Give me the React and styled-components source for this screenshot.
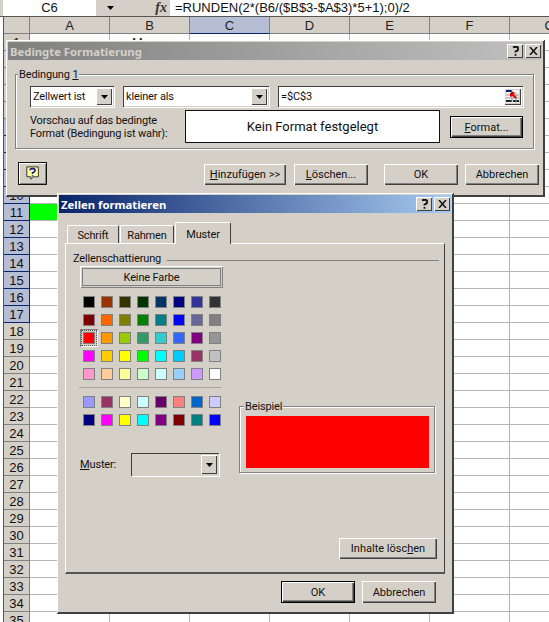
import React from 'react';
import styled, { createGlobalStyle } from 'styled-components';

const Global = createGlobalStyle`
  html, body { margin: 0; padding: 0; background: #fff; }
  * { box-sizing: border-box; }
`;

const FACE = '#d4d0c8';
const UI = 'Roboto, "Liberation Sans", sans-serif';

const Screen = styled.div`
  position: relative;
  width: 549px;
  height: 622px;
  overflow: hidden;
  background: #fff;
  font-family: ${UI};
  font-size: 11px;
  letter-spacing: -0.15px;
  color: #111;
`;

const FormulaBar = styled.div`
  display: flex;
  height: 17px;
  background: ${FACE};
  border-bottom: 1px solid #555;
  padding-left: 3px;
  font-family: "Liberation Sans", sans-serif;
  font-size: 13px;
  letter-spacing: 0;
  line-height: 16px;
`;
const NameBox = styled.div`
  width: 93px;
  background: #fff;
  text-align: center;
`;
const NameArrow = styled.div`
  width: 29px;
  display: flex;
  align-items: center;
  justify-content: center;
`;
const Fx = styled.div`
  width: 45px;
  text-align: right;
  padding-right: 3px;
  font-family: "Liberation Serif", serif;
  font-style: italic;
  font-weight: bold;
  font-size: 14px;
  color: #333;
`;
const FormulaInput = styled.div`
  flex: 1;
  background: #fff;
  padding-left: 5px;
  white-space: nowrap;
`;

const Sheet = styled.div`
  display: grid;
  grid-template-columns: 26px repeat(7, 80px);
  grid-auto-rows: 17px;
  margin-left: 3px;
  border-left: 1px solid #555;
  font-family: "Liberation Sans", sans-serif;
  font-size: 13px;
  letter-spacing: 0;
`;
const Corner = styled.div`
  background: ${FACE};
  border-right: 1px solid #808080;
  border-bottom: 1px solid #808080;
`;
const ColHead = styled.div`
  background: ${p => (p.$sel ? '#b6bed6' : FACE)};
  border-right: 1px solid #808080;
  border-bottom: 1px solid ${p => (p.$sel ? '#0a246a' : '#808080')};
  text-align: center;
  line-height: 17px;
  color: #222;
`;
const RowHead = styled.div`
  background: ${p => (p.$sel ? '#b6bed6' : FACE)};
  border-right: 1px solid ${p => (p.$sel ? '#0a246a' : '#808080')};
  border-bottom: 1px solid ${p => (p.$sel ? '#0a246a' : '#808080')};
  text-align: center;
  line-height: 17px;
  color: #111;
`;
const Cell = styled.div`
  background: ${p => (p.$fill ? '#00ff00' : '#fff')};
  border-right: 1px solid #b4b4b4;
  border-bottom: 1px solid #b4b4b4;
  line-height: 17px;
  padding-left: ${p => (p.$indent ? '22px' : '0')};
  overflow: hidden;
`;

const Dialog = styled.div`
  position: absolute;
  left: ${p => p.$x}px;
  top: ${p => p.$y}px;
  width: ${p => p.$w}px;
  height: ${p => p.$h}px;
  background: ${FACE};
  padding: 2px;
  box-shadow: inset 1px 1px 0 #fff, inset -1px -1px 0 #404040;
  border-right: 1px solid #404040;
  border-bottom: 1px solid #404040;
  display: flex;
  flex-direction: column;
`;
const TitleBar = styled.div`
  height: 18px;
  flex: none;
  display: flex;
  align-items: center;
  padding: 0 1px 0 2px;
  background: ${p => (p.$active
    ? 'linear-gradient(90deg, #0a246a, #a6caf0)'
    : 'linear-gradient(90deg, #808080, #c0c0c0)')};
  color: ${p => (p.$active ? '#fff' : FACE)};
  font-family: "Noto Sans", sans-serif;
  font-weight: bold;
  font-size: 11.3px;
  letter-spacing: 0;
  white-space: nowrap;
`;
const TitleText = styled.span`
  flex: 1;
`;
const CapButton = styled.button`
  width: 16px;
  height: 14px;
  margin-left: ${p => (p.$gap ? '2px' : '0')};
  padding: 0;
  border: 0;
  background: ${FACE};
  box-shadow: inset 1px 1px 0 #fff, inset -1px -1px 0 #404040;
  display: flex;
  align-items: center;
  justify-content: center;
`;

const CondBody = styled.div`
  flex: 1;
  padding: 14px 0 0 7px;
  display: flex;
  flex-direction: column;
`;
const Group = styled.div`
  position: relative;
  border: 1px solid #808080;
  box-shadow: 1px 1px 0 #fff, inset 1px 1px 0 #fff;
`;
const Legend = styled.span`
  position: absolute;
  left: ${p => p.$left}px;
  top: -7px;
  padding: 0 1px;
  line-height: 13px;
  background: ${FACE};
`;
const U = styled.span`
  text-decoration: underline;
  text-underline-offset: 1px;
`;
const CondGroup = styled(Group)`
  width: 519px;
  height: 75px;
  padding: 11px 0 0 14px;
`;
const CondRow = styled.div`
  display: flex;
  gap: 9px;
`;
const Combo = styled.div`
  width: ${p => p.$w}px;
  height: ${p => p.$h || 21}px;
  flex: none;
  background: ${p => (p.$disabled ? FACE : '#fff')};
  box-shadow: inset 1px 1px 0 #404040, inset -1px -1px 0 ${FACE}, 1px 1px 0 #fff;
  padding: 2px 2px 2px 3px;
  display: flex;
  align-items: center;
  justify-content: space-between;
  white-space: nowrap;
`;
const DropButton = styled.div`
  width: 16px;
  height: 100%;
  background: ${FACE};
  box-shadow: inset 1px 1px 0 #fff, inset -1px -1px 0 #404040;
  display: flex;
  align-items: center;
  justify-content: center;
`;
const RangeButton = styled(DropButton)`
  width: 17px;
`;
const PreviewRow = styled.div`
  display: flex;
  align-items: flex-start;
  margin-top: 3px;
`;
const PreviewLabel = styled.div`
  width: 155px;
  padding-top: 4px;
  line-height: 13px;
  white-space: nowrap;
`;
const PreviewBox = styled.div`
  width: 255px;
  height: 33px;
  flex: none;
  background: #fff;
  border: 1px solid #111;
  display: flex;
  align-items: center;
  justify-content: center;
  font-size: 13px;
  letter-spacing: 0;
`;
const FormatSlot = styled.div`
  margin: 6px 0 0 10px;
`;
const Button = styled.button`
  width: ${p => p.$w || 74}px;
  height: ${p => p.$h || 21}px;
  flex: none;
  padding: 0;
  border: ${p => (p.$default ? '1px solid #000' : '0')};
  background: ${FACE};
  box-shadow: inset 1px 1px 0 #fff, inset -1px -1px 0 #404040, inset -2px -2px 0 #808080;
  font-family: ${UI};
  font-size: 11px;
  letter-spacing: 0;
  color: #111;
`;
const CondFooter = styled.div`
  display: flex;
  align-items: flex-end;
  margin-top: 13px;
`;
const HelpButton = styled.button`
  width: 29px;
  height: 23px;
  flex: none;
  padding: 0;
  margin: 0 157px 0 3px;
  border: 1px solid #111;
  background: ${FACE};
  box-shadow: inset 1px 1px 0 #fff, inset -1px -1px 0 #808080;
  display: flex;
  align-items: center;
  justify-content: center;
`;
const FooterSpacer = styled.div`
  width: ${p => p.$w}px;
  flex: none;
`;

const FormatBody = styled.div`
  flex: 1;
  padding: 9px 0 0 6px;
  display: flex;
  flex-direction: column;
`;
const Tabs = styled.div`
  display: flex;
  align-items: flex-end;
  height: 21px;
  padding-left: 2px;
  position: relative;
  z-index: 1;
`;
const Tab = styled.div`
  width: ${p => p.$w}px;
  height: ${p => (p.$active ? 22 : 18)}px;
  margin-right: ${p => (p.$active ? 0 : 1)}px;
  margin-bottom: ${p => (p.$active ? -1 : 0)}px;
  background: ${FACE};
  border-top: 1px solid #fff;
  border-left: 1px solid #fff;
  border-right: 1px solid #404040;
  border-radius: 2px 2px 0 0;
  text-align: center;
  line-height: ${p => (p.$active ? 23 : 19)}px;
`;
const Panel = styled.div`
  width: 380px;
  height: 331px;
  flex: none;
  border-top: 1px solid #fff;
  border-left: 1px solid #fff;
  border-right: 1px solid #404040;
  border-bottom: 2px solid #555;
  padding: 8px 5px 0 7px;
`;
const SectionHead = styled.div`
  display: flex;
  align-items: center;
  gap: 6px;
  line-height: 13px;
`;
const SectionLine = styled.div`
  flex: 1;
  height: 1px;
  margin-top: 3px;
  background: #808080;
`;
const PanelColumns = styled.div`
  display: flex;
`;
const LeftCol = styled.div`
  width: 143px;
  margin-left: 7px;
`;
const NoColor = styled.div`
  height: 22px;
  padding: 2px;
  box-shadow: inset 1px 1px 0 #fff, inset -1px -1px 0 #808080;
  margin-top: 1px;
`;
const NoColorInner = styled.div`
  height: 100%;
  border: 1px solid #808080;
  text-align: center;
  line-height: 18px;
`;
const SwatchGrid = styled.div`
  display: grid;
  grid-template-columns: repeat(8, 18px);
  grid-auto-rows: 18px;
  margin: 5px 0 0 0;
`;
const SwatchCell = styled.div`
  display: flex;
  align-items: center;
  justify-content: center;
  ${p => p.$selected && `
    box-shadow: inset 1px 1px 0 #808080, inset -1px -1px 0 #fff;
    outline: 1px dotted #555;
    outline-offset: -2px;
  `}
`;
const Swatch = styled.div`
  width: 12px;
  height: 12px;
  background: ${p => p.$c};
  border: 1px solid #808080;
`;
const Separator = styled.div`
  height: 1px;
  background: #a8a49c;
  margin: 4px 2px 0 -1px;
`;
const PatternRow = styled.div`
  display: flex;
  align-items: center;
  margin-top: 24px;
`;
const PatternLabel = styled.span`
  width: 51px;
  flex: none;
`;
const RightCol = styled.div`
  margin-left: 16px;
  width: 198px;
  display: flex;
  flex-direction: column;
  align-items: flex-end;
`;
const SampleGroup = styled(Group)`
  width: 196px;
  height: 67px;
  margin: 141px 2px 0 0;
  padding: 9px 5px 0 6px;
`;
const SampleFill = styled.div`
  height: 52px;
  background: #ff0000;
`;
const ClearButton = styled(Button)`
  margin-top: 65px;
`;
const FormatFooter = styled.div`
  display: flex;
  justify-content: flex-end;
  gap: 7px;
  margin: 7px 15px 0 0;
`;

const Tri = () => (
  <svg width="7" height="4" viewBox="0 0 7 4"><path d="M0 0h7L3.500 4z" fill="#000" /></svg>
);
const HelpGlyph = () => (
  <svg width="9" height="10" viewBox="0 0 9 10"><path d="M2 1.500Q4.500 0 7 1.500V4Q6 5 4.500 5.500V6.500M4.500 8V9.800" fill="none" stroke="#111" strokeWidth="1.800" /></svg>
);
const CloseGlyph = () => (
  <svg width="9" height="8" viewBox="0 0 9 8"><path d="M1 0L8 8M8 0L1 8" stroke="#111" strokeWidth="1.500" /></svg>
);
const BubbleIcon = () => (
  <svg width="14" height="15" viewBox="0 0 17 18">
    <path d="M1 1h14v12H9l-3 3v-3H1z" fill="#ffff99" stroke="#111" />
    <path d="M5 5q0-2 3-2t3 2q0 2-3 3v1.500M8 11v1.500" fill="none" stroke="#1a1a9a" strokeWidth="2" />
  </svg>
);
const RangeIcon = () => (
  <svg width="15" height="15" viewBox="0 0 15 15">
    <rect x="1" y="1" width="13" height="13" fill="#f4f4f4" />
    <rect x="1" y="1" width="6" height="2" fill="#0a246a" />
    <rect x="1" y="11" width="6" height="2" fill="#222" />
    <rect x="8" y="11" width="6" height="2" fill="#222" />
    <path d="M1 6h13M1 9h13M7 1v12M11 4v10" stroke="#999" strokeWidth="1" fill="none" />
    <path d="M6 4l5 5M6 4v3.500M6 4h3.500" stroke="#e00000" strokeWidth="2" fill="none" />
  </svg>
);

const COLS = ['A', 'B', 'C', 'D', 'E', 'F', 'G'];
const ROWS = Array.from({ length: 35 }, (_, i) => i + 1);
const THEME = [
  ['#000000','#993300','#333300','#003300','#003366','#000080','#333399','#333333'],
  ['#800000','#ff6600','#808000','#008000','#008080','#0000ff','#666699','#808080'],
  ['#ff0000','#ff9900','#99cc00','#339966','#33cccc','#3366ff','#800080','#969696'],
  ['#ff00ff','#ffcc00','#ffff00','#00ff00','#00ffff','#00ccff','#993366','#c0c0c0'],
  ['#ff99cc','#ffcc99','#ffff99','#ccffcc','#ccffff','#99ccff','#cc99ff','#ffffff'],
];
const EXTRA = [
  ['#9999ff','#993366','#ffffcc','#ccffff','#660066','#ff8080','#0066cc','#ccccff'],
  ['#000080','#ff00ff','#ffff00','#00ffff','#800080','#800000','#008080','#0000ff'],
];

const Swatches = ({ rows }) => (
  <SwatchGrid>
    {rows.flat().map((c, i) => (
      <SwatchCell key={i} $selected={rows === THEME && i === 16}>
        <Swatch $c={c} />
      </SwatchCell>
    ))}
  </SwatchGrid>
);

export default function App() {
  return (
    <Screen>
      <Global />
      <FormulaBar>
        <NameBox>C6</NameBox>
        <NameArrow><Tri /></NameArrow>
        <Fx>fx</Fx>
        <FormulaInput>=RUNDEN(2*(B6/($B$3-$A$3)*5+1);0)/2</FormulaInput>
      </FormulaBar>
      <Sheet>
        <Corner />
        {COLS.map(c => <ColHead key={c} $sel={c === 'C'}>{c}</ColHead>)}
        {ROWS.map(r => (
          <React.Fragment key={r}>
            <RowHead $sel={r >= 6 && r <= 17}>{r}</RowHead>
            {COLS.map(c => (
              <Cell key={c} $fill={c === 'A' && r === 11} $indent={c === 'B' && r === 1}>
                {c === 'B' && r === 1 ? 'M' : ''}
              </Cell>
            ))}
          </React.Fragment>
        ))}
      </Sheet>

      <Dialog $x={6} $y={40} $w={539} $h={157}>
        <TitleBar>
          <TitleText>Bedingte Formatierung</TitleText>
          <CapButton><HelpGlyph /></CapButton>
          <CapButton $gap><CloseGlyph /></CapButton>
        </TitleBar>
        <CondBody>
          <CondGroup>
            <Legend $left={2}>Bedingung <U>1</U></Legend>
            <CondRow>
              <Combo $w={84}>Zellwert ist<DropButton><Tri /></DropButton></Combo>
              <Combo $w={146}>kleiner als<DropButton><Tri /></DropButton></Combo>
              <Combo $w={245}>=$C$3<RangeButton><RangeIcon /></RangeButton></Combo>
            </CondRow>
            <PreviewRow>
              <PreviewLabel>Vorschau auf das bedingte<br />Format (Bedingung ist wahr):</PreviewLabel>
              <PreviewBox>Kein Format festgelegt</PreviewBox>
              <FormatSlot>
                <Button $default $w={73} $h={22}><U>F</U>ormat...</Button>
              </FormatSlot>
            </PreviewRow>
          </CondGroup>
          <CondFooter>
            <HelpButton><BubbleIcon /></HelpButton>
            <Button $w={82}><U>H</U>inzufügen &gt;&gt;</Button>
            <FooterSpacer $w={8} />
            <Button><U>L</U>öschen...</Button>
            <FooterSpacer $w={16} />
            <Button>OK</Button>
            <FooterSpacer $w={7} />
            <Button>Abbrechen</Button>
          </CondFooter>
        </CondBody>
      </Dialog>

      <Dialog $x={57} $y={193} $w={397} $h={421}>
        <TitleBar $active>
          <TitleText>Zellen formatieren</TitleText>
          <CapButton><HelpGlyph /></CapButton>
          <CapButton $gap><CloseGlyph /></CapButton>
        </TitleBar>
        <FormatBody>
          <Tabs>
            <Tab $w={52}>Schrift</Tab>
            <Tab $w={54}>Rahmen</Tab>
            <Tab $w={56} $active>Muster</Tab>
          </Tabs>
          <Panel>
            <SectionHead>Zellenschattierung<SectionLine /></SectionHead>
            <PanelColumns>
              <LeftCol>
                <NoColor><NoColorInner>Keine Farbe</NoColorInner></NoColor>
                <Swatches rows={THEME} />
                <Separator />
                <Swatches rows={EXTRA} />
                <PatternRow>
                  <PatternLabel><U>M</U>uster:</PatternLabel>
                  <Combo $w={88} $h={23} $disabled><span /><DropButton><Tri /></DropButton></Combo>
                </PatternRow>
              </LeftCol>
              <RightCol>
                <SampleGroup>
                  <Legend $left={4}>Beispiel</Legend>
                  <SampleFill />
                </SampleGroup>
                <ClearButton $w={98}>Inhalte lösc<U>h</U>en</ClearButton>
              </RightCol>
            </PanelColumns>
          </Panel>
          <FormatFooter>
            <Button $default $h={22}>OK</Button>
            <Button $h={22}>Abbrechen</Button>
          </FormatFooter>
        </FormatBody>
      </Dialog>
    </Screen>
  );
}
